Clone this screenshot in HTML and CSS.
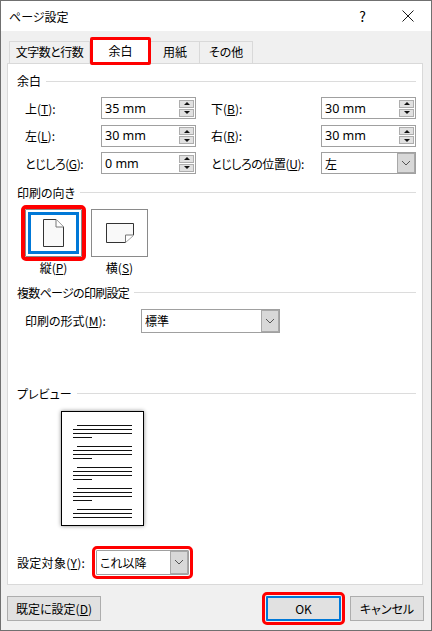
FILE: index.html
```html
<!DOCTYPE html>
<html lang="ja">

<head>
    <meta charset="UTF-8">
    <title>ページ設定</title>
    <link rel="stylesheet" href="styles.css">
</head>

<body>
    <div class="dialog">
        <div class="titlebar">
            <span class="title">ページ設定</span>
            <span class="help">?</span>
            <svg class="close" width="12" height="12" viewBox="0 0 12 12">
                <path d="M.5.5l11 11M11.5.5l-11 11" stroke="#1a1a1a" fill="none" />
            </svg>
        </div>

        <!-- Tabs -->
        <div class="tabs">
            <div class="tab tab_first">文字数と行数</div>
            <div class="tab tab_active">余白</div>
            <div class="tab tab_paper">用紙</div>
            <div class="tab tab_other">その他</div>
        </div>

        <div class="panel">
            <div class="section_head"><span>余白</span></div>
            <div class="margin_grid">
                <label>上(<u>T</u>):</label>
                <div class="spin"><span>35 mm</span><div class="spin_btns"><i class="up"></i><i class="down"></i></div></div>
                <label class="right_label">下(<u>B</u>):</label>
                <div class="spin"><span>30 mm</span><div class="spin_btns"><i class="up"></i><i class="down"></i></div></div>

                <label>左(<u>L</u>):</label>
                <div class="spin"><span>30 mm</span><div class="spin_btns"><i class="up"></i><i class="down"></i></div></div>
                <label class="right_label">右(<u>R</u>):</label>
                <div class="spin"><span>30 mm</span><div class="spin_btns"><i class="up"></i><i class="down"></i></div></div>

                <label class="tight">とじしろ(<u>G</u>):</label>
                <div class="spin"><span>0 mm</span><div class="spin_btns"><i class="up"></i><i class="down"></i></div></div>
                <label class="right_label tight">とじしろの位置(<u>U</u>):</label>
                <div class="combo"><span>左</span><div class="combo_btn"><svg width="10" height="6" viewBox="0 0 10 6"><path d="M1 1l4 4 4-4" stroke="#555" fill="none" /></svg></div></div>
            </div>

            <!-- Orientation -->
            <div class="section_head orient_head"><span>印刷の向き</span></div>
            <div class="orient_row">
                <div class="orient_item">
                    <div class="orient_btn orient_selected">
                        <svg width="21" height="28" viewBox="0 0 21 28">
                            <path d="M.5.5H13L20.5 8V27.5H.5Z" fill="#f9f9f9" stroke="#333" />
                            <path d="M13 .5V8H20.5" fill="#fff" stroke="#777" />
                        </svg>
                    </div>
                    <div class="orient_label">縦(<u>P</u>)</div>
                </div>
                <div class="orient_item">
                    <div class="orient_btn">
                        <svg width="28" height="20" viewBox="0 0 28 20">
                            <path d="M.5.5H27.5V12L19.5 19.5H.5Z" fill="#f9f9f9" stroke="#333" />
                            <path d="M19.5 19.5V12H27.5" fill="#fff" stroke="#777" />
                        </svg>
                    </div>
                    <div class="orient_label">横(<u>S</u>)</div>
                </div>
            </div>

            <div class="section_head pages_head"><span>複数ページの印刷設定</span></div>
            <div class="pages_row">
                <label class="pages_label">印刷の形式(<u>M</u>):</label>
                <div class="combo combo_pages"><span>標準</span><div class="combo_btn"><svg width="10" height="6" viewBox="0 0 10 6"><path d="M1 1l4 4 4-4" stroke="#555" fill="none" /></svg></div></div>
            </div>

            <!-- Preview -->
            <div class="section_head preview_head"><span>プレビュー</span></div>
            <div class="preview_page">
                <div class="para"><b class="first"></b><b></b><b></b><b class="last"></b></div>
                <div class="para"><b class="first"></b><b></b><b></b><b class="last"></b></div>
                <div class="para"><b class="first"></b><b></b><b></b><b class="last"></b></div>
                <div class="para"><b class="first"></b><b></b><b></b><b class="last"></b></div>
                <div class="para"><b class="first"></b><b></b><b></b></div>
            </div>

            <div class="apply_row">
                <label>設定対象(<u>Y</u>):</label>
                <div class="combo combo_apply"><span>これ以降</span><div class="combo_btn"><svg width="10" height="6" viewBox="0 0 10 6"><path d="M1 1l4 4 4-4" stroke="#555" fill="none" /></svg></div></div>
            </div>
        </div>

        <div class="footer">
            <button type="button" class="btn btn_default">既定に設定(<u>D</u>)</button>
            <button type="button" class="btn btn_ok">OK</button>
            <button type="button" class="btn btn_cancel">キャンセル</button>
        </div>
    </div>
</body>

</html>
```

FILE: styles.css
```css
html,
body {
    margin: 0;
    height: 100%;
}

body {
    font-family: "Noto Sans CJK JP", "Noto Sans", sans-serif;
    font-size: 12px;
    font-feature-settings: "palt";
    color: #000;
    background-color: #f0f0f0;
}

.dialog {
    width: 432px;
    height: 631px;
    box-sizing: border-box;
    border: 1px solid #707070;
    background-color: #f0f0f0;
}

.titlebar {
    display: flex;
    align-items: center;
    height: 30px;
    background-color: #fff;
}

.title {
    margin-left: 8px;
    flex: 1;
}

.help {
    font-size: 14px;
    margin-right: 36px;
}

.close {
    margin-right: 17px;
}

.tight {
    letter-spacing: -0.4px;
}

/* Tabs */
.tabs {
    display: flex;
    align-items: flex-end;
    height: 32px;
    margin-left: 8px;
}

.tab {
    box-sizing: border-box;
    height: 22px;
    line-height: 20px;
    text-align: center;
    border: 1px solid #d9d9d9;
    border-bottom: 0;
    border-left: 0;
}

.tab_first {
    width: 81px;
    letter-spacing: -0.5px;
    border-left: 1px solid #d9d9d9;
}

.tab_active {
    position: relative;
    z-index: 1;
    width: 61px;
    height: 28px;
    line-height: 22px;
    margin-bottom: -2px;
    background-color: #fff;
    border: 3px solid #f00;
    border-radius: 2px;
}

.tab_paper {
    width: 49px;
}

.tab_other {
    width: 53px;
}

.panel {
    box-sizing: border-box;
    width: 416px;
    height: 522px;
    margin-left: 6px;
    padding: 9px 6px 0 9px;
    background-color: #fff;
    border: 1px solid #d9d9d9;
}

.section_head {
    display: flex;
    align-items: center;
    height: 16px;
    line-height: 16px;
}

.section_head:after {
    content: "";
    flex: 1;
    height: 1px;
    margin-left: 5px;
    background-color: #dcdcdc;
}

.margin_grid {
    display: grid;
    grid-template-columns: 76px 95px 15px 110px 95px;
    grid-auto-rows: 22px;
    row-gap: 5.5px;
    align-items: center;
    margin: 8px 0 0 8px;
}

.right_label {
    grid-column: 4;
}

.spin,
.combo {
    display: flex;
    align-items: center;
    box-sizing: border-box;
    height: 22px;
    background-color: #fff;
    border: 1px solid #a0a0a0;
}

.spin span,
.combo span {
    flex: 1;
    padding-left: 3px;
    white-space: nowrap;
}

.spin span {
    font-family: "Noto Sans", sans-serif;
    font-size: 12.5px;
}

.spin_btns {
    display: flex;
    flex-direction: column;
    gap: 1px;
    margin-right: 1px;
}

.spin_btns i {
    display: flex;
    align-items: center;
    justify-content: center;
    width: 13px;
    height: 6px;
    background-color: #e1e1e1;
    border: 1px solid #adadad;
}

.spin_btns i:after {
    content: "";
    border-left: 3px solid transparent;
    border-right: 3px solid transparent;
}

.spin_btns .up:after {
    border-bottom: 3px solid #111;
}

.spin_btns .down:after {
    border-top: 3px solid #111;
}

.combo_btn {
    display: flex;
    align-items: center;
    justify-content: center;
    align-self: stretch;
    width: 16px;
    background-color: #d8d8d8;
    border: 1px solid #a8a8a8;
}

/* Orientation */
.orient_head {
    margin-top: 10.5px;
}

.orient_row {
    display: flex;
    gap: 9px;
    margin: 8px 0 0 8px;
}

.orient_item {
    width: 57px;
}

.orient_btn {
    display: flex;
    align-items: center;
    justify-content: center;
    box-sizing: border-box;
    height: 48px;
    background-color: #fff;
    border: 1px solid #8a8a8a;
}

.orient_selected {
    border-radius: 1px;
    outline: 4px solid #f00;
    box-shadow: inset 0 0 0 2px #fff, inset 0 0 0 5px #0078d7;
}

.orient_label {
    height: 16px;
    margin-top: 3px;
    line-height: 16px;
    text-align: center;
}

.pages_head {
    margin-top: 9px;
    letter-spacing: -0.7px;
}

.pages_row {
    display: flex;
    align-items: center;
    margin: 8px 0 0 8px;
}

.pages_label {
    width: 116px;
}

.combo_pages {
    width: 139px;
    height: 24px;
}

.preview_head {
    margin-top: 53px;
}

.preview_page {
    display: flex;
    flex-direction: column;
    gap: 8px;
    box-sizing: border-box;
    width: 83px;
    height: 115px;
    margin: 9px 0 0 44px;
    padding: 13px 11px 0 11px;
    background-color: #fff;
    border: 1px solid #000;
    box-shadow: 0 0 4px #888;
}

.para {
    display: flex;
    flex-direction: column;
    gap: 3px;
}

.para b {
    display: block;
    height: 1px;
    background-color: #111;
}

.para .first {
    margin-left: 4px;
}

.para .last {
    width: 19px;
}

.apply_row {
    display: flex;
    align-items: center;
    margin-top: 24px;
}

.apply_row label {
    width: 79px;
    letter-spacing: 0.3px;
}

.combo_apply {
    width: 93px;
    height: 25px;
    border-radius: 1px;
    outline: 3px solid #f00;
    outline-offset: 1px;
}

/* Buttons */
.footer {
    display: flex;
    margin: 11px 0 0 6px;
}

.btn {
    box-sizing: border-box;
    height: 25px;
    padding: 0;
    font: inherit;
    font-feature-settings: "palt";
    color: #000;
    background-color: #e1e1e1;
    border: 1px solid #adadad;
}

.btn_default {
    width: 94px;
    margin-right: 165px;
}

.btn_ok {
    width: 75px;
    margin-right: 9px;
    border: 2px solid #0078d7;
    border-radius: 1px;
    outline: 3px solid #f00;
    outline-offset: 1px;
}

.btn_cancel {
    width: 74px;
}
```
